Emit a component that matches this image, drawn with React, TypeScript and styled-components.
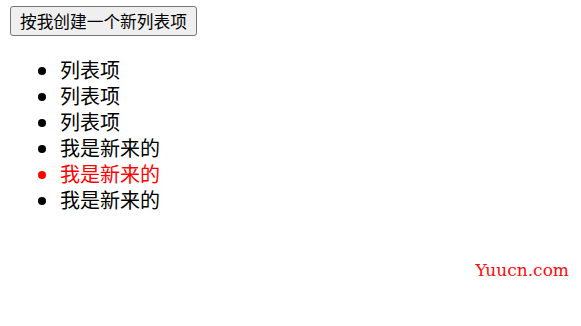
import React, { useState } from 'react';
import styled, { createGlobalStyle } from 'styled-components';

const GlobalStyle = createGlobalStyle`
  html, body {
    margin: 0;
    padding: 0;
    background: #fff;
  }
  body {
    font-family: "Noto Sans CJK SC", "Liberation Sans", sans-serif;
    color: #000;
  }
`;

const Page = styled.div`
  position: relative;
  width: 581px;
  height: 326px;
  padding: 6px 0 0 10px;
  box-sizing: border-box;
  overflow: hidden;
`;

const AddButton = styled.button`
  display: block;
  height: 30px;
  padding: 0 9px;
  font-family: "Noto Sans CJK SC", sans-serif;
  font-size: 16.7px;
  line-height: 28px;
  color: #000;
  background: #efefef;
  border: 1px solid #767676;
  border-radius: 3px;
  cursor: pointer;
`;

const List = styled.ul`
  margin: 21px 0 0;
  padding-left: 50px;
  list-style: disc;
`;

const Item = styled.li<{ $active?: boolean }>`
  font-size: 20px;
  line-height: 26px;
  color: ${p => (p.$active ? '#ff0000' : '#000')};
`;

// site watermark laid over the bottom-right corner
const Watermark = styled.span`
  position: absolute;
  right: 12px;
  top: 259px;
  font-family: "DejaVu Serif", serif;
  font-size: 17px;
  line-height: 22px;
  color: #ff0a0a;
`;

export default function App() {
  const [items, setItems] = useState<string[]>([
    '列表项',
    '列表项',
    '列表项',
    '我是新来的',
    '我是新来的',
    '我是新来的',
  ]);

  const addItem = () => setItems(list => [...list, '我是新来的']);

  return (
    <Page>
      <GlobalStyle />
      <AddButton onClick={addItem}>按我创建一个新列表项</AddButton>
      <List>
        {items.map((text, i) => (
          <Item key={i} $active={i === 4}>
            {text}
          </Item>
        ))}
      </List>
      <Watermark>Yuucn.com</Watermark>
    </Page>
  );
}
